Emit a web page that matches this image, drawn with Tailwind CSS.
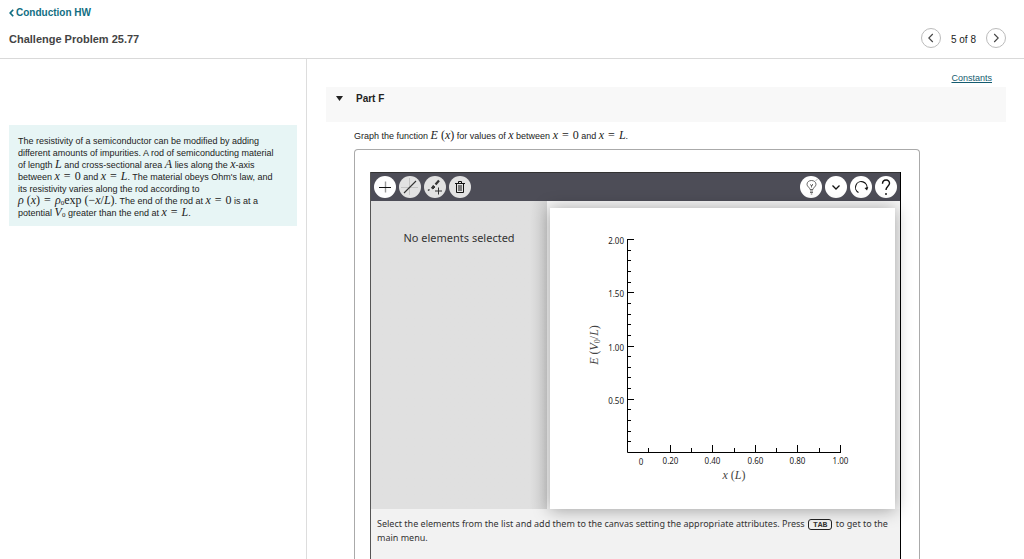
<!DOCTYPE html>
<html lang="en">
<head>
    <meta charset="UTF-8">
    <meta name="viewport" content="width=device-width, initial-scale=1.0">
    <title>Challenge Problem 25.77</title>
    <script src="https://cdn.jsdelivr.net/npm/@tailwindcss/browser@4"></script>
</head>
<body class="flex h-screen flex-col bg-white font-['Liberation_Sans',sans-serif] text-[9px] text-[#222]">
    <header class="flex h-[59px] shrink-0 items-start justify-between border-b border-[#d9d9d9] pl-[9px] pr-[18px]">
        <div>
            <a href="#" class="mt-[7px] flex items-center text-[10px] leading-[12px] font-bold text-[#116e83]">
                <svg class="mr-[2px] h-[8px] w-[5px]" viewBox="0 0 5 8" fill="none" stroke="currentColor" stroke-width="1.7"><path d="M4.2 .7 1.2 4l3 3.3"/></svg>Conduction HW
            </a>
            <h1 class="mt-[13px] text-[11px] leading-[14px] font-bold text-[#444]">Challenge Problem 25.77</h1>
        </div>
        <nav class="mt-[28px] flex items-center gap-[10px] text-[10px]">
            <button aria-label="Previous" class="flex size-[20px] items-center justify-center rounded-full border border-[#bbb]">
                <svg class="size-[10px]" viewBox="0 0 10 10" fill="none" stroke="#444" stroke-width="1.1"><path d="M6.8 1 2.8 5l4 4"/></svg>
            </button>
            <span class="pt-[2px]">5 of 8</span>
            <button aria-label="Next" class="flex size-[20px] items-center justify-center rounded-full border border-[#bbb]">
                <svg class="size-[10px]" viewBox="0 0 10 10" fill="none" stroke="#444" stroke-width="1.1"><path d="m3.2 1 4 4-4 4"/></svg>
            </button>
        </nav>
    </header>

    <div class="flex min-h-0 flex-1">
        <aside class="w-[307px] shrink-0 border-r border-[#ddd] px-[9px] pt-[66px]">
            <p class="bg-[#e7f5f5] px-[9px] pb-[7px] pt-[10px] leading-[12px] whitespace-nowrap text-[#222]">
                The resistivity of a semiconductor can be modified by adding<br>
                different amounts of impurities. A rod of semiconducting material<br>
                of length <i class="font-['Liberation_Serif',serif] text-[12px] leading-[0]">L</i> and cross-sectional area <i class="font-['Liberation_Serif',serif] text-[12px] leading-[0]">A</i> lies along the <i class="font-['Liberation_Serif',serif] text-[12px] leading-[0]">x</i>-axis<br>
                between <span class="font-['Liberation_Serif',serif] text-[12px] leading-[0]"><i>x</i><span class="mx-[1px]"> = </span>0</span> and <span class="font-['Liberation_Serif',serif] text-[12px] leading-[0]"><i>x</i><span class="mx-[1px]"> = </span><i>L</i></span>. The material obeys Ohm's law, and<br>
                its resistivity varies along the rod according to<br>
                <span class="font-['Liberation_Serif',serif] text-[12px] leading-[0]"><i>ρ</i> (<i>x</i>)<span class="mx-[1px]"> = </span><i>ρ</i><sub class="bottom-0 align-[-1px] text-[7px]">0</sub>exp (−<i>x</i>/<i>L</i>)</span>. The end of the rod at <span class="font-['Liberation_Serif',serif] text-[12px] leading-[0]"><i>x</i><span class="mx-[1px]"> = </span>0</span> is at a<br>
                potential <span class="font-['Liberation_Serif',serif] text-[12px] leading-[0]"><i>V</i><sub class="bottom-0 align-[-1px] text-[7px]">0</sub></span> greater than the end at <span class="font-['Liberation_Serif',serif] text-[12px] leading-[0]"><i>x</i><span class="mx-[1px]"> = </span><i>L</i></span>.
            </p>
        </aside>

        <main class="flex min-w-0 flex-1 flex-col pl-[19px] pr-[18px]">
            <div class="flex h-[28px] shrink-0 items-end justify-end pb-[3px] pr-[14px]">
                <a href="#" class="leading-[11px] text-[#155c70] underline">Constants</a>
            </div>
            <h2 class="flex h-[35px] shrink-0 items-start bg-[#f8f8f8] pl-[10px] pt-[6px] text-[10px] leading-[12px] font-bold">
                <svg class="mr-[13px] mt-[3px] h-[5px] w-[7px]" viewBox="0 0 7 5"><path d="M0 0h7L3.500 5z" fill="#222"/></svg>Part F
            </h2>

            <div class="flex min-h-0 flex-1 flex-col pl-[28px]">
                <p class="pt-[7px] leading-[14px] whitespace-nowrap">Graph the function <span class="font-['Liberation_Serif',serif] text-[12px] leading-[0]"><i>E</i> (<i>x</i>)</span> for values of <i class="font-['Liberation_Serif',serif] text-[12px] leading-[0]">x</i> between <span class="font-['Liberation_Serif',serif] text-[12px] leading-[0]"><i>x</i><span class="mx-[1px]"> = </span>0</span> and <span class="font-['Liberation_Serif',serif] text-[12px] leading-[0]"><i>x</i><span class="mx-[1px]"> = </span><i>L</i></span>.</p>

                <section class="mr-[86px] mt-[6px] flex flex-1 flex-col rounded-t-[4px] border border-b-0 border-[#aaa] pl-[15px] pr-[18px] pt-[22px]">
                    <!-- Graphing tool -->
                    <div class="flex-1 border-x border-l-[#555] border-r-black bg-[#f2f2f2] font-['Noto_Sans',sans-serif]">
                        <div class="flex h-[29px] items-center justify-between border-t border-[#333] bg-[#4d4d57] px-[3px]">
                            <div class="flex gap-[3px]">
                                <button aria-label="Add" class="size-[22px] rounded-full bg-white">
                                    <svg viewBox="0 0 22 22" fill="none"><path d="M11.500 5.500v11" stroke="#999" stroke-width="1.4"/><path d="M5 11.500h12" stroke="#111"/></svg>
                                </button>
                                <button aria-label="Line" class="size-[22px] rounded-full bg-[#e2e2e2]">
                                    <svg viewBox="0 0 22 22" fill="none"><path d="M10.500 2v17M2 11.500h17" stroke="#c4c4c4"/><path d="m5 17 12-12" stroke="#333" stroke-width="1.1"/></svg>
                                </button>
                                <button aria-label="Edit" class="size-[22px] rounded-full bg-[#e2e2e2]">
                                    <svg viewBox="0 0 22 22" fill="none" stroke="#333"><path d="m15 4.500-3.500 4" stroke-width="2.200"/><path d="m9 9.500 2 1.500-2 2-1.500-1z" fill="#333"/><path d="m5.500 13.500-1.500 1" stroke-width="1.500"/><path d="M14.500 11.500v7M11 15h7"/></svg>
                                </button>
                                <button aria-label="Delete" class="size-[22px] rounded-full bg-[#e2e2e2]">
                                    <svg viewBox="0 0 22 22" fill="none" stroke="#111"><path d="M7.500 7.500v9h7v-9M6 7.500h10M9.500 7V5.500h3V7M10 9v6M12 9v6"/></svg>
                                </button>
                            </div>
                            <div class="flex gap-[3px]">
                                <button aria-label="Hint" class="size-[22px] rounded-full bg-white">
                                    <svg viewBox="0 0 22 22" fill="none" stroke="#444" stroke-width=".8"><path d="M10 13.500c0-2-3-2.700-3-5.200C7 6 9 4.500 11.500 4.500S16 6.100 16 8.300c0 2.500-3 3.200-3 5.200z"/><path d="m10 8.500 1.500 1 1.500-1-1.500 1v2M10 15h3M10 16.500h3M10.800 18h1.500M16 4.500l1-1"/></svg>
                                </button>
                                <button aria-label="More" class="size-[22px] rounded-full bg-white">
                                    <svg viewBox="0 0 22 22" fill="none" stroke="#111" stroke-width="1.300"><path d="m7.500 9.500 3.500 3.500 3.500-3.500"/></svg>
                                </button>
                                <button aria-label="Reset" class="size-[22px] rounded-full bg-white">
                                    <svg viewBox="0 0 22 22" fill="none" stroke="#111" stroke-width="1.100"><path d="M8.500 16.500A5.800 5.800 0 1 1 17 12.500"/><path d="m14.500 12 2.500 2.500 1.300-3.500z" fill="#111" stroke="none"/></svg>
                                </button>
                                <button aria-label="Help" class="size-[22px] rounded-full bg-white">
                                    <svg viewBox="0 0 22 22" fill="none" stroke="#111" stroke-width="1.400"><path d="M7.500 7.800C7.600 2.500 15 3 14.500 7.500c-.3 2.700-3.500 3-3.500 6.500M11 17v2"/></svg>
                                </button>
                            </div>
                        </div>

                        <div class="flex h-[308px]">
                            <p class="w-[176px] shrink-0 bg-linear-to-r from-[#e0e0e0] from-90% to-[#d3d3d3] pt-[30px] text-center text-[11px] leading-[14px] text-[#333]">No elements selected</p>
                            <div class="flex-1 bg-[#f6f6f6] pl-[3px] pr-[5px] pt-[7px]">
                                <div class="h-full bg-white shadow-[0_1px_16px_rgba(0,0,0,0.35)]">
                                    <svg id="plot" class="block h-[301px] w-full" viewBox="0 0 345 301" fill="none" stroke="#000" stroke-width="1" font-size="8">
                                        <path d="M77.500 31v213.500H291"/>
                                        <g id="ticks"></g>
                                        <g fill="#444" stroke="none" font-family="Liberation Serif, serif" font-size="12">
                                            <text x="184" y="271" text-anchor="middle"><tspan font-style="italic">x</tspan> (<tspan font-style="italic">L</tspan>)</text>
                                            <text transform="translate(48 137) rotate(-90)" text-anchor="middle"><tspan font-style="italic">E</tspan> (<tspan font-style="italic">V</tspan><tspan font-size="8" dy="2">0</tspan><tspan dy="-2">/</tspan><tspan font-style="italic">L</tspan>)</text>
                                        </g>
                                    </svg>
                                </div>
                            </div>
                        </div>

                        <p class="px-[6px] pt-[8px] leading-[14px] whitespace-nowrap text-[#333]">Select the elements from the list and add them to the canvas setting the appropriate attributes. Press <kbd class="mx-[1px] rounded-[3px] border border-[#222] px-[4px] font-['Liberation_Mono',monospace] text-[8px] leading-none font-bold">TAB</kbd> to get to the<br>main menu.</p>
                    </div>
                </section>
            </div>
        </main>
    </div>

    <script>
        const ticks = document.getElementById('ticks');
        const ns = 'http://www.w3.org/2000/svg';

        function addTick(d) {
            const path = document.createElementNS(ns, 'path');
            path.setAttribute('d', d);
            ticks.appendChild(path);
        }

        function addLabel(x, y, value, anchor) {
            const label = document.createElementNS(ns, 'text');
            label.setAttribute('x', x);
            label.setAttribute('y', y);
            label.setAttribute('text-anchor', anchor);
            label.setAttribute('fill', '#222');
            label.setAttribute('stroke', 'none');
            label.textContent = value;
            ticks.appendChild(label);
        }

        // Vertical axis, 0 to 2.00
        for (let i = 1; i <= 20; i++) {
            const y = Math.round(244 - i * 10.65) + 0.5;
            const major = i % 5 === 0;
            addTick(`M77 ${y}h${major ? 7 : 4}`);
            if (major) addLabel(74, y + 4, (i / 10).toFixed(2), 'end');
        }

        // Horizontal axis, 0 to 1.00
        addLabel(91, 257, '0', 'middle');
        for (let i = 1; i <= 10; i++) {
            const x = Math.round(77 + i * 21.3) + 0.5;
            const major = i % 2 === 0;
            addTick(`M${x} 244v${major ? -7 : -4}`);
            if (major) addLabel(x, 256, (i / 10).toFixed(2), 'middle');
        }
    </script>
</body>
</html>
